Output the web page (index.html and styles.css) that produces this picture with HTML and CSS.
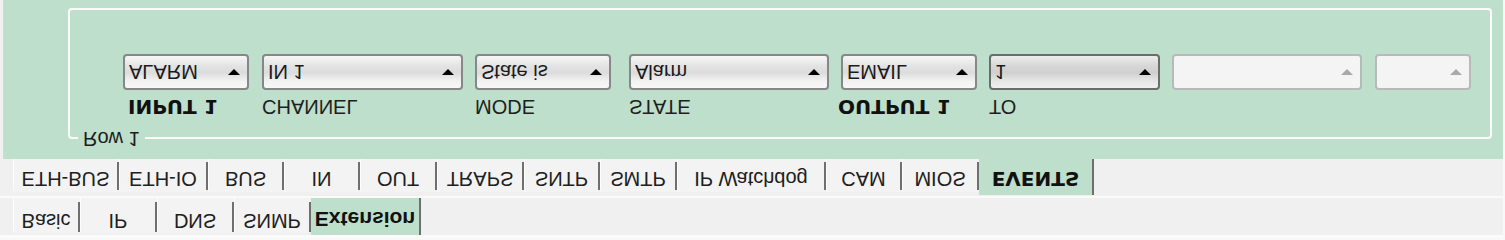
FILE: index.html
```html
<!DOCTYPE html>
<html lang="en">
<head>
<meta charset="utf-8">
<title>Extension - EVENTS</title>
<link rel="stylesheet" href="styles.css">
</head>
<body>
<div class="screen">
  <div class="tabstrip tabstrip-top">
    <div class="tab" style="width:67px"><span class="tab-inner">Basic</span></div>
    <div class="tab" style="width:77px"><span class="tab-inner">IP</span></div>
    <div class="tab" style="width:77px"><span class="tab-inner">DNS</span></div>
    <div class="tab" style="width:77px"><span class="tab-inner">SNMP</span></div>
    <div class="tab tab-active tab-active-top" style="width:110px"><span class="tab-inner tab-label-ext">Extension</span></div>
  </div>
  <div class="tabstrip tabstrip-sub">
    <div class="tab" style="width:106px"><span class="tab-inner">ETH-BUS</span></div>
    <div class="tab" style="width:89px"><span class="tab-inner">ETH-IO</span></div>
    <div class="tab" style="width:76px"><span class="tab-inner">BUS</span></div>
    <div class="tab" style="width:76px"><span class="tab-inner">IN</span></div>
    <div class="tab" style="width:77px"><span class="tab-inner">OUT</span></div>
    <div class="tab" style="width:87px"><span class="tab-inner">TRAPS</span></div>
    <div class="tab" style="width:76px"><span class="tab-inner">SNTP</span></div>
    <div class="tab" style="width:77px"><span class="tab-inner">SMTP</span></div>
    <div class="tab" style="width:149px"><span class="tab-inner">IP Watchdog</span></div>
    <div class="tab" style="width:76px"><span class="tab-inner">CAM</span></div>
    <div class="tab" style="width:77px"><span class="tab-inner">MIOS</span></div>
    <div class="tab tab-active tab-active-sub" style="width:115px"><span class="tab-inner tab-label-bold">EVENTS</span></div>
  </div>
  <div class="panel">
    <div class="group">
      <div class="legend">Row 1</div>
      <div class="fields">
        <div class="field" style="width:126px">
          <div class="label label-bold label-inset">INPUT 1</div>
          <div class="combo"><span class="combo-text">ALARM</span><span class="arrow"></span></div>
        </div>
        <div class="field field-gap1" style="width:201px">
          <div class="label">CHANNEL</div>
          <div class="combo"><span class="combo-text">IN 1</span><span class="arrow"></span></div>
        </div>
        <div class="field" style="width:136px">
          <div class="label">MODE</div>
          <div class="combo"><span class="combo-text">State is</span><span class="arrow"></span></div>
        </div>
        <div class="field field-gap6" style="width:200px">
          <div class="label">STATE</div>
          <div class="combo"><span class="combo-text">Alarm</span><span class="arrow"></span></div>
        </div>
        <div class="field" style="width:136px">
          <div class="label label-bold label-outset">OUTPUT 1</div>
          <div class="combo"><span class="combo-text">EMAIL</span><span class="arrow"></span></div>
        </div>
        <div class="field" style="width:171px">
          <div class="label">TO</div>
          <div class="combo combo-hot"><span class="combo-text">1</span><span class="arrow"></span></div>
        </div>
        <div class="field" style="width:190px">
          <div class="label"></div>
          <div class="combo combo-disabled"><span class="combo-text"></span><span class="arrow"></span></div>
        </div>
        <div class="field field-gap1" style="width:96px">
          <div class="label"></div>
          <div class="combo combo-disabled"><span class="combo-text"></span><span class="arrow"></span></div>
        </div>
      </div>
    </div>
  </div>
</div>
</body>
</html>
```
FILE: styles.css
```css
html, body {
  margin: 0;
  padding: 0;
  background: #f8f8f8;
}

body {
  width: 1505px;
  height: 238px;
  overflow: hidden;
  font-family: "Liberation Sans", Arial, sans-serif;
  font-size: 20px;
  line-height: 22px;
  color: #1c1c1c;
}

/* the reference is shown mirrored top-to-bottom */
.screen {
  width: 1503px;
  height: 238px;
  background: #f0f0f0;
  transform: scaleY(-1);
  display: flex;
  flex-direction: column;
}

.tabstrip {
  display: flex;
  align-items: flex-start;
  padding-left: 13px;
  box-sizing: border-box;
}

.tabstrip-top {
  height: 40px;
  border-top: 3px solid #fbfbfb;
}

.tabstrip-sub {
  height: 39px;
  border-top: 2px solid #fafafa;
}

.tab {
  box-sizing: border-box;
  background: #f3f3f3;
  border-left: 1px solid #fdfdfd;
  border-radius: 3px 3px 0 0;
  display: flex;
}

.tabstrip-top .tab {
  margin-top: 2px;
  height: 35px;
  padding-top: 1px;
}

.tabstrip-sub .tab {
  margin-top: 4px;
  height: 33px;
  padding-top: 2px;
}

.tab-inner {
  flex: 1;
  box-sizing: border-box;
  border-right: 2px solid #6f6f6f;
  text-align: center;
  white-space: nowrap;
  color: #202020;
}

.tabstrip-top .tab-inner {
  height: 30px;
  padding-top: 0;
}

.tabstrip-sub .tab-inner {
  height: 28px;
  padding-top: 0;
}

.tab-active {
  background: #bddfcb;
  border-left: 0;
  border-radius: 0;
}

.tabstrip-top .tab-active-top {
  margin-top: 0;
  height: 37px;
  padding-top: 0;
}

.tabstrip-top .tab-active-top .tab-inner {
  height: 37px;
  padding-top: 5px;
}

.tabstrip-sub .tab-active-sub {
  margin-top: 1px;
  height: 36px;
  padding-top: 0;
}

.tabstrip-sub .tab-active-sub .tab-inner {
  height: 36px;
  padding-top: 5px;
}

.tab-label-bold {
  font-family: "DejaVu Sans", Verdana, sans-serif;
  font-weight: bold;
  color: #111;
}

.tab-label-ext {
  font-weight: bold;
  font-size: 21px;
  color: #111;
}

.panel {
  flex: 1;
  margin-left: 3px;
  border-left: 1px solid #d6d6d6;
  background: #bddfcb;
  display: flex;
  flex-direction: column;
}

.group {
  margin: 20px 11px 8px 64px;
  border: 2px solid #fbfbfb;
  border-radius: 4px;
  padding: 0 0 44px 53px;
}

.legend {
  width: fit-content;
  margin: -13px 0 0 -45px;
  padding: 0 5px;
  background: #bddfcb;
  color: #1c1c1c;
}

.fields {
  display: flex;
  gap: 12px;
  margin-top: 10px;
}

.field {
  display: flex;
  flex-direction: column;
  flex: none;
}

.field-gap1 {
  margin-left: 1px;
}

.field-gap6 {
  margin-left: 6px;
}

.label {
  height: 22px;
  margin-bottom: 6px;
  white-space: nowrap;
  color: #1e1e1e;
}

.label-bold {
  font-family: "DejaVu Sans", Verdana, sans-serif;
  font-weight: bold;
  color: #111;
}

.label-inset {
  padding-left: 5px;
}

.label-outset {
  margin-left: -3px;
}

.combo {
  box-sizing: border-box;
  height: 36px;
  border: 2px solid #878787;
  border-radius: 4px;
  background: linear-gradient(to bottom, #f8f8f8 0%, #f2f2f2 22%, #dcdcdc 48%, #e3e3e3 68%, #f6f6f6 100%);
  display: flex;
  align-items: center;
  padding: 0 7px 0 4px;
}

.combo-text {
  flex: 1;
  white-space: nowrap;
  color: #1a1a1a;
}

.arrow {
  width: 0;
  height: 0;
  border-left: 6px solid transparent;
  border-right: 6px solid transparent;
  border-top: 6px solid #000;
}

.combo-hot {
  border-color: #6c6c6c;
  background: linear-gradient(to bottom, #f0f0f0 0%, #e6e6e6 22%, #cfcfcf 48%, #d6d6d6 68%, #ededed 100%);
}

.combo-disabled {
  border-color: #b9b9b9;
  background: #f4f4f4;
}

.combo-disabled .arrow {
  border-top-color: #a9a9a9;
}
```
